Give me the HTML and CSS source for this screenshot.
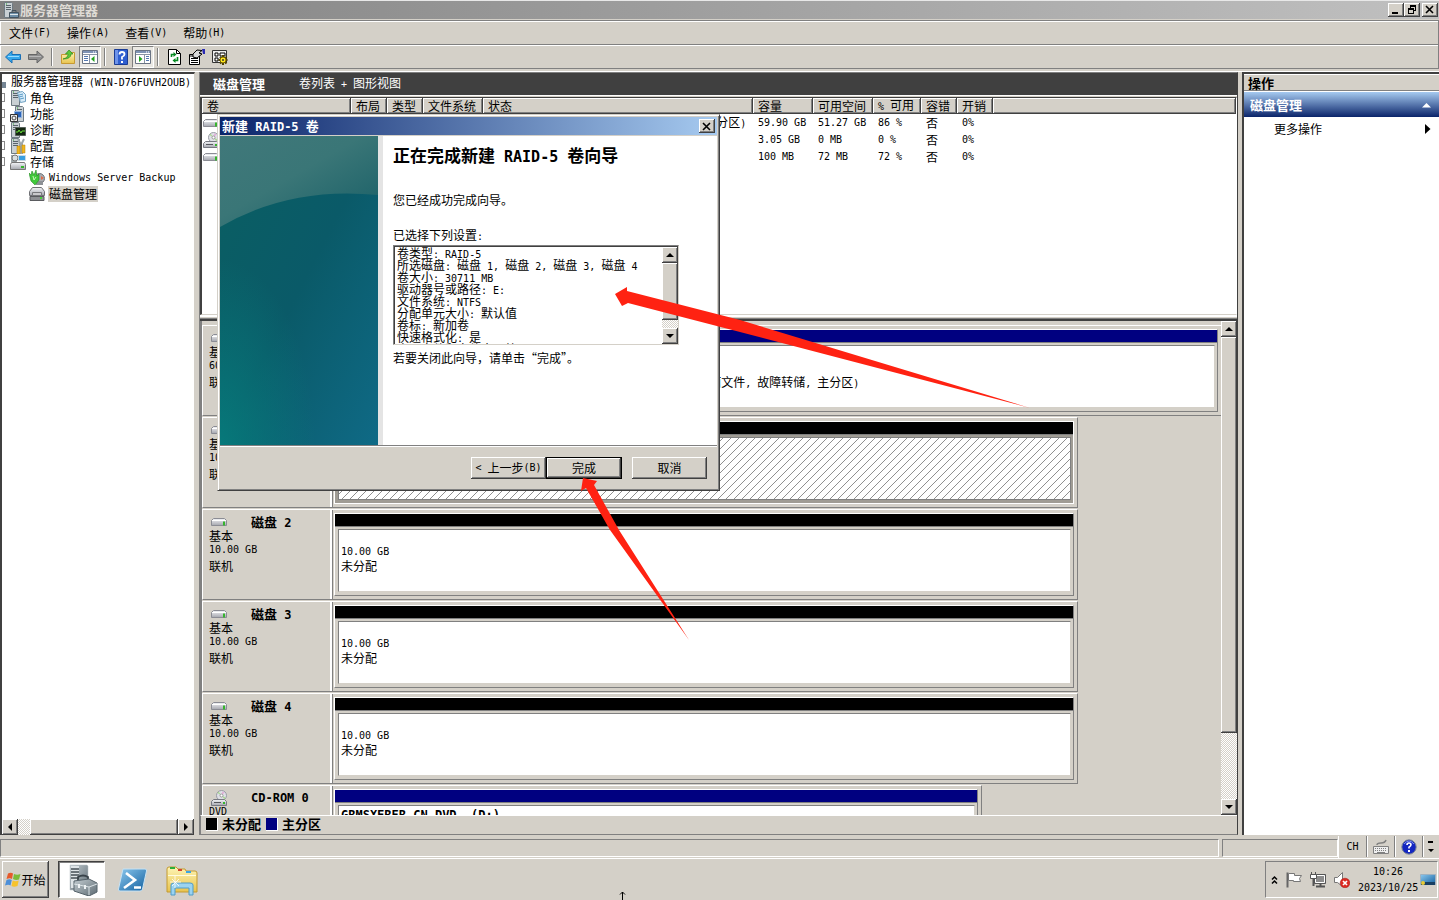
FILE: index.html
```html
<!DOCTYPE html>
<html lang="zh-CN">
<head>
<meta charset="utf-8">
<title>服务器管理器</title>
<link rel="stylesheet" href="styles.css">
</head>
<body>
<svg class="defs" aria-hidden="true">
  <defs>
    <linearGradient id="gSteel" x1="0" y1="0" x2="0" y2="1"><stop offset="0" stop-color="#f4f5f8"/><stop offset="1" stop-color="#a4a6ae"/></linearGradient>
    <linearGradient id="gBox" x1="0" y1="0" x2="1" y2="1"><stop offset="0" stop-color="#c3cdd2"/><stop offset="1" stop-color="#5d6a72"/></linearGradient>
    <linearGradient id="gBlue" x1="0" y1="0" x2="1" y2="1"><stop offset="0" stop-color="#8cc8ee"/><stop offset="1" stop-color="#12609f"/></linearGradient>
    <linearGradient id="gFold" x1="0" y1="0" x2="0" y2="1"><stop offset="0" stop-color="#fdf4b4"/><stop offset="1" stop-color="#e8c34e"/></linearGradient>
    <linearGradient id="gBanner" x1="0" y1="0" x2="1" y2="1"><stop offset="0" stop-color="#0a5f62"/><stop offset=".5" stop-color="#0a5a68"/><stop offset="1" stop-color="#0f6a86"/></linearGradient>
    <linearGradient id="gHaze" x1="0" y1="0" x2="1" y2="1"><stop offset="0" stop-color="#40787a"/><stop offset=".45" stop-color="#3a7677"/><stop offset="1" stop-color="#175e66"/></linearGradient>
    <radialGradient id="gGlow" cx="0" cy="1" r=".6"><stop offset="0" stop-color="#06807e" stop-opacity=".8"/><stop offset="1" stop-color="#06807e" stop-opacity="0"/></radialGradient>
    <symbol id="drive" viewBox="0 0 16 10"><path d="M2.500 1.500h11l2 2v5h-15v-5z" fill="url(#gSteel)" stroke="#8b8c94"/><path d="M1 3.500h14" stroke="#fff"/><path d="M12 4.500h2v4h-2z" fill="#35b52c"/></symbol>
    <symbol id="dvd" viewBox="0 0 16 16"><circle cx="10.500" cy="5.500" r="5" fill="#dfe0e6" stroke="#999ba5"/><path d="M10.500 5.500L6.500 3l1-1.500zM10.500 5.500l4 2-1 2z" fill="#a9d992"/><path d="M10.500 5.500l1-4 2 1z" fill="#e4a9d8"/><circle cx="10.500" cy="5.500" r="1.500" fill="#fff" stroke="#999"/><path d="M2.500 9.500h11l2 2v4H.5v-4z" fill="url(#gSteel)" stroke="#777982"/><path d="M3 12.500h7" stroke="#55565c"/><path d="M12 12h2v2h-2z" fill="#35b52c"/></symbol>
    <symbol id="tower" viewBox="0 0 16 16"><path d="M1.500.5h7l1 1v14h-8z" fill="#c9d0d4" stroke="#6e7a82"/><path d="M3 3.500h5M3 5.500h5M3 7.500h5" stroke="#59646b"/><path d="M3 2h1" stroke="#2ba32b"/></symbol>
    <symbol id="server" viewBox="0 0 16 16"><use href="#tower"/><path d="M6.500 10.500h9v5h-9z" fill="#6e8fa8" stroke="#43525e"/><path d="M9 10V8.500h4V10" fill="none" stroke="#43525e"/><path d="M7 12.500h8" stroke="#dce5ea"/></symbol>
    <symbol id="roles" viewBox="0 0 16 16"><use href="#tower"/><path d="M7.500 2.500l5-1 3 3v7l-5 1z" fill="#d9ecf8" stroke="#6fa1c2"/><path d="M9 5l4-1M9 7l4-1M10 9l4-1" stroke="#5a9bc8"/></symbol>
    <symbol id="features" viewBox="0 0 16 16"><use href="#tower" x="4"/><path d="M4.500 5.500h7v6h-7z" fill="#2b64b8" stroke="#93b4e0"/><path d="M.5 8.500h7v7h-7z" fill="#eee" stroke="#333"/><circle cx="4" cy="12" r="2" fill="none" stroke="#444"/></symbol>
    <symbol id="diag" viewBox="0 0 16 16"><use href="#tower"/><path d="M5.500 5.500h10v8h-10z" fill="#142812" stroke="#55605a"/><path d="M6 10h2l1-2 2 3 1-2h3" fill="none" stroke="#6ae23b"/></symbol>
    <symbol id="config" viewBox="0 0 16 16"><use href="#tower"/><path d="M8 1l2 4v10h2V5l2-4" fill="none" stroke="#9da6aa" stroke-width="2"/><path d="M7 8h3v8H7zM12 7h3v8h-3z" fill="#f0b51e" stroke="#b88206" stroke-width=".5"/></symbol>
    <symbol id="storage" viewBox="0 0 16 16"><path d="M1 1h6v7H1z" fill="#9fa8ac"/><circle cx="5" cy="4" r="3" fill="#d9dee0" stroke="#777"/><path d="M8.500 1.500h7v5h-7z" fill="#3a9fe0" stroke="#c7d8e4"/><path d="M1.500 8.500h13l1 2v5H.5v-5z" fill="url(#gSteel)" stroke="#777"/><path d="M11 12h3v2h-3z" fill="#35b52c"/></symbol>
    <symbol id="backup" viewBox="0 0 16 16"><circle cx="10.500" cy="8.500" r="5" fill="#a9adb2" stroke="#70757a"/><path d="M7 11h7v4H7z" fill="#8d9196"/><path d="M0 3l2 2 1-4 2 4 2-5 1 6 2-2v6l-4 5-4-4z" fill="#41c93b" stroke="#218b20" stroke-width=".6"/><path d="M4 6l1 4 2-3" fill="none" stroke="#c9f5b8"/><path d="M12 6l3 2-3 2z" fill="#df6c48"/></symbol>
    <symbol id="diskmgmt" viewBox="0 0 16 16"><path d="M3.500 1.500h9l3 4v4H.5v-4z" fill="url(#gSteel)" stroke="#6f7074"/><path d="M3.500 6.500h9v3h-9z" fill="#c9c9cc" stroke="#77787c"/><path d="M1 10.500h14v4H1z" fill="#8e9094" stroke="#5a5b5f"/><path d="M11 12h2" stroke="#46d33b" stroke-width="2"/></symbol>
    <symbol id="panel" viewBox="0 0 16 16"><path d="M.5 1.500h15v13H.5z" fill="#fff" stroke="#6a7484"/><path d="M1 2h14v2H1z" fill="#7f93b5"/><path d="M11 3h1m1 0h1" stroke="#fff"/><path d="M1 5.500h14M7.500 6v8" stroke="#8a94a5"/><path d="M2 7.500h4M2 9.500h4M2 11.500h4" stroke="#5579b0"/><path d="M12.500 7v6L9 10z" fill="#24a320"/></symbol>
  </defs>
</svg>

<div class="app">
  <header class="titlebar">
    <svg class="i16"><use href="#server"/></svg>
    <h1>服务器管理器</h1>
    <div class="winbtns">
      <button class="bevel" aria-label="最小化"><svg viewBox="0 0 10 9"><path d="M1 7h6v2H1z"/></svg></button>
      <button class="bevel" aria-label="还原"><svg viewBox="0 0 10 9"><path d="M3 0h6v6H7V5h1V2H4v1H3zM1 3h6v6H1zm1 2v3h4V5z" fill-rule="evenodd"/></svg></button>
      <button class="bevel close" aria-label="关闭"><svg viewBox="0 0 10 9"><path d="M1 1l7 7M8 1L1 8" stroke="#000" stroke-width="1.600"/></svg></button>
    </div>
  </header>

  <nav class="menubar">
    <button>文件<span class="lat">(F)</span></button>
    <button>操作<span class="lat">(A)</span></button>
    <button>查看<span class="lat">(V)</span></button>
    <button>帮助<span class="lat">(H)</span></button>
  </nav>

  <div class="toolbar">
    <button aria-label="后退"><svg class="i16" viewBox="0 0 16 16"><path d="M.5 8L7 2v3.500h8.500v5H7V14z" fill="#35a7ea" stroke="#1a6fb5"/><path d="M3 7.500h11" stroke="#9bdcff"/></svg></button>
    <button aria-label="前进"><svg class="i16" viewBox="0 0 16 16"><path d="M15.500 8L9 2v3.500H.5v5H9V14z" fill="#8e8e8e" stroke="#666"/><path d="M1 7.500h12" stroke="#b9b9b9"/></svg></button>
    <i class="sep"></i>
    <button aria-label="向上"><svg class="i16" viewBox="0 0 16 16"><path d="M1.500 5.500h5l1-2h7v11h-13z" fill="url(#gFold)" stroke="#c79a33"/><path d="M3 10q5-1 5-5H5.500L9 1l4 4h-2q0 5-8 5z" fill="#5cc83b" stroke="#2e8a1c" stroke-width=".7"/></svg></button>
    <button class="pressed" aria-label="显示/隐藏控制台树"><svg class="i16"><use href="#panel"/></svg></button>
    <i class="sep"></i>
    <button aria-label="帮助"><svg class="i16" viewBox="0 0 16 16"><path d="M1.500.5h13v15h-13z" fill="#2f5fd0" stroke="#1b3c94"/><path d="M2 1h3v14H2z" fill="#6d93ea"/><path d="M6.500 5.500q0-2.500 2.500-2.500t2.500 2.200Q11.500 7 9 8v2.500" fill="none" stroke="#fff" stroke-width="1.800"/><path d="M8 12h2v2H8z" fill="#fff"/></svg></button>
    <button class="pressed" aria-label="显示/隐藏操作窗格"><svg class="i16" viewBox="0 0 16 16"><path d="M.5 1.500h15v13H.5z" fill="#fff" stroke="#6a7484"/><path d="M1 2h14v2H1z" fill="#7f93b5"/><path d="M11 3h1m1 0h1" stroke="#fff"/><path d="M1 5.500h14M9.500 6v8" stroke="#8a94a5"/><path d="M11 7.500h3M11 9.500h3M11 11.500h3" stroke="#5579b0"/><path d="M4 7v6l3.500-3z" fill="#24a320"/></svg></button>
    <i class="sep"></i>
    <button aria-label="刷新"><svg class="i16" viewBox="0 0 16 16"><path d="M2.500.5h8l4 4v11h-12z" fill="#fff" stroke="#000"/><path d="M10.500.5v4h4" fill="none" stroke="#000"/><path d="M5.500 8V5.500H8M11.500 8v3.500H9" fill="none" stroke="#078a23" stroke-width="1.600"/><path d="M7.500 3l3 2.500-3 2.500zM9.500 9v5l-3-2.500z" fill="#078a23"/></svg></button>
    <button aria-label="属性"><svg class="i16" viewBox="0 0 16 16"><path d="M.5 5.500h10v10H.5z" fill="#fff" stroke="#000"/><path d="M1 7h9M2 9.500h7M2 11.500h7M2 13.500h7" stroke="#000"/><path d="M4 5l4-4 5 .5-3 2.500 3 1-5 4-4-1z" fill="#d8d8d8" stroke="#000"/><path d="M13 0h3v5h-2z" fill="#2a2ab4"/></svg></button>
    <button class="gear" aria-label="设置"><svg class="i16" viewBox="0 0 16 16"><path d="M.5 1.500h14v12H.5z" fill="#eee" stroke="#333"/><path d="M3 4h3v3H3zM3 9h3v3H3z" fill="#fff" stroke="#000"/><path d="M8 4h5v3H8z" fill="#fff" stroke="#000"/><path d="M11 6v10M6.500 11h9M8 8l6.500 6.500M14.500 8L8 14.500" stroke="#4a3d00" stroke-width="2"/><circle cx="11" cy="11" r="3" fill="#ffe81c" stroke="#766100"/><circle cx="11" cy="11" r="1" fill="#333"/></svg></button>
  </div>

  <main class="workspace">
    <aside class="treepane">
      <ul class="tree">
        <li class="root"><span>服务器管理器 <span class="lat">(WIN-D76FUVH2OUB)</span></span></li>
        <li><svg class="i16"><use href="#roles"/></svg><span>角色</span></li>
        <li><svg class="i16"><use href="#features"/></svg><span>功能</span></li>
        <li><svg class="i16"><use href="#diag"/></svg><span>诊断</span></li>
        <li><svg class="i16"><use href="#config"/></svg><span>配置</span></li>
        <li><svg class="i16"><use href="#storage"/></svg><span>存储</span></li>
        <li class="child"><svg class="i16"><use href="#backup"/></svg><span class="lat">Windows Server Backup</span></li>
        <li class="child"><svg class="i16"><use href="#diskmgmt"/></svg><span class="selected">磁盘管理</span></li>
      </ul>
      <div class="hscroll">
        <button class="bevel" aria-label="向左滚动"><svg viewBox="0 0 8 8"><path d="M6 0v8L2 4z"/></svg></button>
        <div class="thumb bevel"></div>
        <button class="bevel" aria-label="向右滚动"><svg viewBox="0 0 8 8"><path d="M2 0v8l4-4z"/></svg></button>
      </div>
    </aside>

    <section class="center">
      <div class="viewhead"><b>磁盘管理</b><span>卷列表<span class="lat"> + </span>图形视图</span></div>
      <div class="volumes">
        <table>
          <colgroup><col class="w149"><col class="w36"><col class="w36"><col class="w60"><col class="w270"><col class="w60"><col class="w60"><col class="w48"><col class="w36"><col class="w36"><col></colgroup>
          <thead><tr><th>卷</th><th>布局</th><th>类型</th><th>文件系统</th><th>状态</th><th>容量</th><th>可用空间</th><th><span class="lat">% </span>可用</th><th>容错</th><th>开销</th><th></th></tr></thead>
          <tbody>
            <tr><td><svg class="vol"><use href="#drive"/></svg></td><td></td><td></td><td></td><td>状态良好<span class="lat"> (</span>启动<span class="lat">, </span>页面文件<span class="lat">, </span>故障转储<span class="lat">, </span>主分区<span class="lat">)</span></td><td class="lat">59.90 GB</td><td class="lat">51.27 GB</td><td class="lat">86 %</td><td>否</td><td class="lat">0%</td><td></td></tr>
            <tr><td><svg class="vol tall"><use href="#dvd"/></svg></td><td></td><td></td><td></td><td></td><td class="lat">3.05 GB</td><td class="lat">0 MB</td><td class="lat">0 %</td><td>否</td><td class="lat">0%</td><td></td></tr>
            <tr><td><svg class="vol"><use href="#drive"/></svg></td><td></td><td></td><td></td><td></td><td class="lat">100 MB</td><td class="lat">72 MB</td><td class="lat">72 %</td><td>否</td><td class="lat">0%</td><td></td></tr>
          </tbody>
        </table>
      </div>
      <div class="splitter"></div>
      <div class="diskarea">
        <div class="disks">
          <div class="disk full">
            <div class="label"><div class="name"><svg class="drv"><use href="#drive"/></svg><b>磁盘<span class="lat"> 0</span></b></div><p>基本</p><p class="lat">60.00 GB</p><p class="state">联机</p></div>
            <div class="parts">
              <div class="part primary small"><div class="bar"></div><div class="info"></div></div>
              <div class="part primary"><div class="bar"></div><div class="info"><p><b class="lat">(C:)</b></p><p class="lat">59.90 GB NTFS</p><p>状态良好<span class="lat"> (</span>启动<span class="lat">, </span>页面文件<span class="lat">, </span>故障转储<span class="lat">, </span>主分区<span class="lat">)</span></p></div></div>
            </div>
          </div>
          <div class="disk">
            <div class="label"><div class="name"><svg class="drv"><use href="#drive"/></svg><b>磁盘<span class="lat"> 1</span></b></div><p>基本</p><p class="lat">10.00 GB</p><p class="state">联机</p></div>
            <div class="parts"><div class="part chosen"><div class="bar"></div><div class="info"></div></div></div>
          </div>
          <div class="disk">
            <div class="label"><div class="name"><svg class="drv"><use href="#drive"/></svg><b>磁盘<span class="lat"> 2</span></b></div><p>基本</p><p class="lat">10.00 GB</p><p class="state">联机</p></div>
            <div class="parts"><div class="part"><div class="bar"></div><div class="info"><p></p><p class="lat">10.00 GB</p><p>未分配</p></div></div></div>
          </div>
          <div class="disk">
            <div class="label"><div class="name"><svg class="drv"><use href="#drive"/></svg><b>磁盘<span class="lat"> 3</span></b></div><p>基本</p><p class="lat">10.00 GB</p><p class="state">联机</p></div>
            <div class="parts"><div class="part"><div class="bar"></div><div class="info"><p></p><p class="lat">10.00 GB</p><p>未分配</p></div></div></div>
          </div>
          <div class="disk">
            <div class="label"><div class="name"><svg class="drv"><use href="#drive"/></svg><b>磁盘<span class="lat"> 4</span></b></div><p>基本</p><p class="lat">10.00 GB</p><p class="state">联机</p></div>
            <div class="parts"><div class="part"><div class="bar"></div><div class="info"><p></p><p class="lat">10.00 GB</p><p>未分配</p></div></div></div>
          </div>
          <div class="disk cd">
            <div class="label"><div class="name"><svg class="drv tall"><use href="#dvd"/></svg><b class="lat">CD-ROM 0</b></div><p class="lat">DVD</p></div>
            <div class="parts"><div class="part primary"><div class="bar"></div><div class="info"><p><b class="lat">GRMSXFRER_CN_DVD&nbsp; (D:)</b></p></div></div></div>
          </div>
        </div>
        <div class="vscroll">
          <button class="bevel" aria-label="向上滚动"><svg viewBox="0 0 8 8"><path d="M0 6h8L4 2z"/></svg></button>
          <div class="thumb bevel"></div>
          <div class="track"></div>
          <button class="bevel" aria-label="向下滚动"><svg viewBox="0 0 8 8"><path d="M0 2h8L4 6z"/></svg></button>
        </div>
      </div>
      <div class="legend"><i></i><b>未分配</b><i class="blue"></i><b>主分区</b></div>
    </section>

    <aside class="actions">
      <h2>操作</h2>
      <button class="group"><b>磁盘管理</b><svg viewBox="0 0 10 6"><path d="M0 5.500h9L4.500 1z" fill="#fff"/></svg></button>
      <button class="more"><span>更多操作</span><svg viewBox="0 0 6 10"><path d="M0 0v10l5.500-5z"/></svg></button>
    </aside>
  </main>

  <footer class="status">
    <div class="cell grow"></div><div class="cell side"></div>
    <div class="langbar">
      <button class="lat">CH</button>
      <button aria-label="键盘"><svg class="i16" viewBox="0 0 16 16"><path d="M.5 7.500h15v7H.5z" fill="#eee" stroke="#808080"/><path d="M2 9.500h12M2 11.500h12" stroke="#808080" stroke-dasharray="1 1"/><path d="M4 13.500h8" stroke="#808080"/><path d="M4 6q0-2 4-2t5-3" fill="none" stroke="#808080" stroke-width="1.500"/></svg></button>
      <button aria-label="语言帮助"><svg class="i16" viewBox="0 0 16 16"><circle cx="8" cy="8" r="7.200" fill="#1426c0" stroke="#7f8894"/><path d="M3 5q5-6 10 0" fill="none" stroke="#7e93ef"/><path d="M6 6q0-2 2-2t2 1.800Q10 7 8 8.200V9.500" fill="none" stroke="#fff" stroke-width="1.600"/><path d="M7 11h2v2H7z" fill="#fff"/></svg></button>
      <button class="opts" aria-label="选项"><svg viewBox="0 0 6 12"><path d="M0 0h5v2H0zM0 8h6l-3 3z"/></svg></button>
    </div>
  </footer>

  <div class="taskbar">
    <button class="start bevel"><svg viewBox="0 0 16 16"><path d="M3 1.500q3-1.500 5 0L7 7Q5 5.500 1.500 7z" fill="#e65a2b"/><path d="M9 2q3 1.500 6.500 0l-1.500 5.500Q11 8.500 8 7z" fill="#7bbb38"/><path d="M1.500 8q3-1.500 5.300 0L5.500 13.500Q3.500 12 0 13.500z" fill="#4d8fd8"/><path d="M7.700 8.500q3 1.500 6 0L12.500 14Q9 15.500 6.500 14z" fill="#f7c32c"/></svg><span>开始</span></button>
    <button class="task active" aria-label="服务器管理器"><svg viewBox="0 0 32 32"><path d="M4 1h17l1 1v24H4z" fill="url(#gBox)" stroke="#b9c1c5" stroke-width=".5"/><path d="M5 2h8v22H5z" fill="#dfe5e8"/><path d="M5 5h8M5 8h8M5 11h8M5 14h8" stroke="#454f55" stroke-width="1.500"/><path d="M12 16v-3q5-3 10 0v3" fill="none" stroke="#39434a" stroke-width="1.800"/><path d="M8 17l15-2 8 4v9l-8 4-15-5z" fill="url(#gBox)" stroke="#55626a"/><path d="M8 20l15 3 8-3M23 23v8" fill="none" stroke="#dbe3e6"/><path d="M13 20v4M19 21v4" stroke="#eef2f4" stroke-width="2"/></svg></button>
    <button class="task" aria-label="PowerShell"><svg viewBox="0 0 32 32"><path d="M7 5h22q2 0 1.500 2l-4 18q-.5 2-2.500 2H4q-2 0-1.500-2l4-18Q7 5 7 5z" fill="url(#gBlue)" stroke="#c6e2f4"/><path d="M10 9l9 7-11 8M18 23.500h7" fill="none" stroke="#fff" stroke-width="2.600"/></svg></button>
    <button class="task" aria-label="资源管理器"><svg viewBox="0 0 32 32"><path d="M1 5q0-2 2-2h7l2 2h7l1 2h9q2 0 2 2v19H1z" fill="url(#gFold)" stroke="#c39a31"/><path d="M4 3h5v2H4z" fill="#2cae3a"/><path d="M12 5h4v2h-4z" fill="#d3452e"/><path d="M20 7h5v2h-5z" fill="#3ba5e2"/><path d="M2 11.500h28" stroke="#fffbe0"/><path d="M5 31V21q0-2 3-2h16q3 0 3 2v10h-4v-7H9v7z" fill="#9bd3f0" stroke="#4f9cc9"/><path d="M9 12v12M4 18h11M6 15l7 7M13 15l-7 7" stroke="#fff" stroke-width=".8"/></svg></button>
    <div class="tray">
      <svg class="chev" viewBox="0 0 7 10"><path d="M1 4.500L3.500 2 6 4.500M1 8.500L3.500 6 6 8.500" fill="none" stroke="#000" stroke-width="1.500"/></svg>
      <svg class="i16" viewBox="0 0 16 16"><path d="M1.500.5v15" stroke="#666" stroke-width="2"/><path d="M2.500 1.500h6v2h7l-2 3 1 3h-7v-1h-5z" fill="#fff" stroke="#777"/></svg>
      <svg class="i16" viewBox="0 0 16 16"><path d="M4.500 2.500h11v9h-11z" fill="#8c8c8c" stroke="#555"/><path d="M5.500 3.500h9v7h-9z" fill="none" stroke="#fff"/><path d="M6 14.500h9" stroke="#555" stroke-width="2"/><path d="M10.500 12v2" stroke="#555" stroke-width="2"/><path d="M3.500 6v8" stroke="#555" stroke-width="2"/><path d="M1.500 0v3M5.500 0v3" stroke="#555"/><path d="M.5 2.500h6v4h-6z" fill="#fff" stroke="#555"/></svg>
      <svg class="i16" viewBox="0 0 16 16"><path d="M.5 5.500h3l5-5v14l-5-4h-3z" fill="#fff" stroke="#777"/><circle cx="11" cy="11" r="4.800" fill="#dc2a22" stroke="#a31612" stroke-width=".5"/><path d="M9 9l4 4M13 9l-4 4" stroke="#fff" stroke-width="1.700"/></svg>
      <div class="clock"><div class="lat">10:26</div><div class="lat">2023/10/25</div></div>
      <svg class="i16" viewBox="0 0 16 16"><path d="M.5 2.500h15v10H.5z" fill="url(#gBlue)" stroke="#9fb2c0"/><path d="M1 10h14v3H1z" fill="#183f63"/><circle cx="3" cy="11" r="2" fill="#e8cb37"/></svg>
    </div>
  </div>

  <div class="dialog" role="dialog" aria-labelledby="dlgTitle">
    <div class="dlgtitle"><b id="dlgTitle">新建<span class="lat"> RAID-5 </span>卷</b><button class="bevel" aria-label="关闭对话框"><svg viewBox="0 0 10 9"><path d="M1 1l7 7M8 1L1 8" stroke="#000" stroke-width="1.600"/></svg></button></div>
    <div class="dlgbody">
      <svg class="banner" viewBox="0 0 158 309" preserveAspectRatio="none"><path d="M0 0h158v309H0z" fill="url(#gBanner)"/><path d="M0 0h158v309H0z" fill="url(#gGlow)"/><path d="M0 0h158v59Q70 50 0 91z" fill="url(#gHaze)"/></svg>
      <div class="page">
        <h2>正在完成新建<span class="lat"> RAID-5 </span>卷向导</h2>
        <p class="done">您已经成功完成向导。</p>
        <p class="cap">已选择下列设置<span class="lat">:</span></p>
        <div class="listbox">
          <div class="lines">
            <p>卷类型<span class="lat">: RAID-5</span></p>
            <p>所选磁盘<span class="lat">: </span>磁盘<span class="lat"> 1, </span>磁盘<span class="lat"> 2, </span>磁盘<span class="lat"> 3, </span>磁盘<span class="lat"> 4</span></p>
            <p>卷大小<span class="lat">: 30711 MB</span></p>
            <p>驱动器号或路径<span class="lat">: E:</span></p>
            <p>文件系统<span class="lat">: NTFS</span></p>
            <p>分配单元大小<span class="lat">: </span>默认值</p>
            <p>卷标<span class="lat">: </span>新加卷</p>
            <p>快速格式化<span class="lat">: </span>是</p>
            <p>启用文件和文件夹压缩<span class="lat">: </span>否</p>
          </div>
          <div class="vscroll">
            <button class="bevel" aria-label="向上滚动"><svg viewBox="0 0 8 8"><path d="M0 6h8L4 2z"/></svg></button>
            <div class="thumb bevel"></div>
            <div class="track"></div>
            <button class="bevel" aria-label="向下滚动"><svg viewBox="0 0 8 8"><path d="M0 2h8L4 6z"/></svg></button>
          </div>
        </div>
        <p class="hint">若要关闭此向导，请单击“完成”。</p>
      </div>
    </div>
    <div class="dlgfoot">
      <button class="btn bevel"><span class="lat">&lt; </span>上一步<span class="lat">(B)</span></button><button class="btn bevel default">完成</button><button class="btn bevel last">取消</button>
    </div>
  </div>

  <svg class="marks" viewBox="0 0 1439 900" aria-hidden="true">
    <g fill="#ff2212"><path d="M615 294L627 287V291L740 320L1030 408L740 332L628 303L622 306Z"/><path d="M583 478L597 481L594 485L619 530L689 640L610 530L586 488L581 491Z"/></g>
    <path d="M622.500 892v8M620 894.500L622.500 892L625 894.500" fill="none" stroke="#000"/>
  </svg>
</div>
</body>
</html>
```
FILE: styles.css
```css
* { box-sizing: border-box; }
body {
  margin: 0;
  background: #d4d0c8;
  color: #000;
  font: 12px/16px "Noto Sans CJK SC", sans-serif;
}
p, h1, h2, ul { margin: 0; padding: 0; }
button { font: inherit; color: inherit; background: none; border: 0; padding: 0; display: flex; align-items: center; justify-content: center; }
b, h1 { font-size: 13px; font-weight: 700; }
svg { display: block; flex: none; }
.lat { font-family: "DejaVu Sans Mono", monospace; font-size: 10px; white-space: pre; }
b .lat, b.lat { font-size: 12px; }
.defs { position: absolute; width: 0; height: 0; }
.i16 { width: 16px; height: 16px; }
.bevel {
  background: #d4d0c8;
  box-shadow: inset -1px -1px #404040, inset 1px 1px #fff, inset -2px -2px #808080;
}

.app { position: relative; display: flex; flex-direction: column; height: 100vh; min-height: 640px; overflow: hidden; }

.titlebar { height: 20px; flex: none; display: flex; align-items: center; gap: 1px; padding: 0 1px 1px 3px; background: linear-gradient(90deg, #808080, #c0c0c0); border-top: 1px solid #e8e8e8; border-bottom: 1px solid #d4d0c8; color: #dedbd5; }
.winbtns { display: flex; margin-left: auto; }
.winbtns button { width: 16px; height: 14px; }
.winbtns svg, .dlgtitle svg { width: 10px; height: 9px; }
.winbtns .close { margin-left: 2px; }

.menubar, .toolbar { height: 24px; flex: none; display: flex; align-items: center; border-top: 1px solid #808080; border-right: 1px solid #808080; box-shadow: inset 1px 1px #fff; }
.menubar { gap: 16px; padding-left: 9px; }
.toolbar { height: 25px; gap: 7px; padding-left: 5px; border-bottom: 1px solid #808080; }
.toolbar .pressed { width: 22px; height: 22px; margin: 0 -4px; border: 1px solid; border-color: #808080 #fff #fff #808080; background: #eae8e3; }
.toolbar .sep { width: 2px; height: 18px; border-left: 1px solid #808080; border-right: 1px solid #fff; }

.workspace { flex: 1; min-height: 0; display: flex; gap: 4px; margin-top: 2px; border-top: 1px solid #fff; }
.treepane { width: 195px; flex: none; display: flex; flex-direction: column; background: #fff; border-top: 2px solid #404040; border-left: 2px solid #404040; border-right: 1px solid #d4d0c8; margin-bottom: 1px; overflow: hidden; }
.tree { flex: 1; list-style: none; }
.tree li { height: 16px; display: flex; align-items: center; gap: 4px; padding-left: 8px; white-space: pre; }
.tree li:not(.child):not(.root) { background: linear-gradient(#888, #888) 0 3px / 2px 1px no-repeat, linear-gradient(#888, #888) 2px 3px / 1px 9px no-repeat, linear-gradient(#888, #888) 0 11px / 2px 1px no-repeat; }
.tree .root { padding-left: 9px; background: linear-gradient(#758594, #758594) 0 8px / 4px 6px no-repeat; }
.tree .root .lat { margin-left: 3px; }
.tree .child { padding-left: 27px; }
.selected { background: #d4d0c8; padding: 0 1px; margin-left: -1px; }
.hscroll, .vscroll { display: flex; background: repeating-conic-gradient(#d4d0c8 0 25%, #fff 0 50%) 0 0 / 2px 2px; }
.hscroll button { width: 16px; height: 16px; }
.hscroll .thumb { flex: 1; margin-left: 12px; }
.hscroll svg, .vscroll svg { width: 8px; height: 8px; }
.vscroll { width: 16px; flex: none; flex-direction: column; }
.vscroll button { height: 16px; flex: none; }
.vscroll .thumb { flex: 6 1 0; }
.vscroll .track { flex: 1 1 0; }

.center { flex: 1; min-width: 0; display: flex; flex-direction: column; border: 1px solid #808080; border-right-color: #404040; margin-bottom: 1px; }
.viewhead { height: 23px; flex: none; display: flex; align-items: center; gap: 34px; padding-left: 13px; background: #404040; color: #fff; border-bottom: 1px solid #fff; margin-bottom: 1px; }
.volumes { flex: 0 1 218px; overflow: hidden; background: #fff; border: 2px solid #404040; border-right: 1px solid #fff; border-bottom: 1px solid #d4d0c8; border-top-width: 1px; }
.volumes table { width: 100%; table-layout: fixed; border-collapse: separate; border-spacing: 0; }
.volumes th { height: 16px; padding: 0 0 0 5px; text-align: left; font-weight: 400; line-height: 14px; background: #d4d0c8; box-shadow: inset -1px -1px #404040, inset 1px 1px #fff, inset -2px -2px #808080; white-space: nowrap; }
.volumes td { height: 17px; padding: 0 0 0 5px; line-height: 14px; white-space: nowrap; overflow: hidden; }
.volumes td:first-child { padding-left: 1px; }
.w149 { width: 149px; } .w36 { width: 36px; } .w60 { width: 60px; } .w270 { width: 270px; } .w48 { width: 48px; }
.vol, .drv { width: 16px; height: 10px; }
.vol.tall, .drv.tall { height: 16px; }

.splitter { height: 6px; flex: none; border-top: 2px solid #fff; border-bottom: 2px solid #404040; box-shadow: inset 0 -1px #808080; }
.diskarea { flex: 1; min-height: 0; display: flex; border-left: 2px solid #808080; }
.disks { flex: 1; min-width: 0; overflow: hidden; padding-top: 4px; }
.disk { display: flex; height: 91px; margin-bottom: 1px; width: 876px; border: 1px solid; border-color: #fff #808080 #808080 #fff; }
.disk.full { width: auto; border-right: 0; }
.disk.cd { width: 780px; }
.label { width: 130px; flex: none; padding: 5px 0 0 6px; border-right: 1px solid #808080; box-shadow: inset -2px 0 #fff; }
.label p { line-height: 14px; }
.label .state { line-height: 16px; margin-top: 1px; }
.name { display: flex; align-items: center; gap: 24px; height: 14px; padding-left: 2px; line-height: 14px; }
.parts { flex: 1; min-width: 0; display: flex; padding: 3px 3px 3px 1px; }
.part { flex: 1; min-width: 0; display: flex; flex-direction: column; border: 1px solid; border-color: #fff #808080 #808080 #fff; }
.part.small { flex: 0 0 260px; }
.bar { height: 13px; flex: none; background: #000; border-bottom: 1px solid #808080; }
.primary .bar { background: #000080; }
.info { flex: 1; margin: 2px 2px 3px 3px; padding: 1px 0 0 2px; background: #fff; border: 1px solid; border-color: #808080 #d4d0c8 #d4d0c8 #808080; overflow: hidden; white-space: nowrap; }
.info p { height: 14px; line-height: 14px; }
.chosen { background: #a09c94; border-color: #fff; }
.chosen .info { border-color: #808080; background: linear-gradient(to bottom right, #fff 45%, #909090 48%, #909090 52%, #fff 55%) 0 0 / 8px 8px; }
.legend { height: 19px; flex: none; display: flex; align-items: center; gap: 4px; padding: 0 5px 1px; border-top: 1px solid #fff; border-left: 1px solid #808080; }
.legend i { width: 12px; height: 13px; background: #000; border: 1px solid #fff; border-width: 0 1px 1px 0; }
.legend b { line-height: 14px; padding-bottom: 2px; }
.legend .blue { background: #000080; margin-left: 1px; }

.actions { width: 197px; flex: none; background: #fff; border: solid #404040; border-width: 2px 0 0 2px; margin-bottom: 1px; }
.actions h2 { height: 17px; font-size: 13px; line-height: 16px; padding-left: 4px; background: #d4d0c8; border-top: 1px solid #fff; border-bottom: 1px solid #808080; }
.group { width: 100%; height: 25px; margin-top: 1px; padding: 0 7px 0 6px; justify-content: space-between; color: #fff; background: linear-gradient(#a6caf0, #0a246a); }
.group svg { width: 10px; height: 6px; }
.more { width: 100%; height: 24px; padding: 0 8px 0 30px; justify-content: space-between; }
.more svg { width: 6px; height: 10px; }

.status { height: 22px; flex: none; display: flex; gap: 3px; }
.cell { margin: 3px 0 1px; border: 1px solid; border-color: #808080 #fff #fff #808080; }
.grow { flex: 1; }
.side { width: 116px; }
.langbar { display: flex; background: #d4d0c8; border-left: 1px solid #fff; margin-left: -3px; padding-bottom: 1px; }
.langbar button { width: 28px; border-right: 1px solid #808080; box-shadow: 1px 0 #fff; }
.langbar .opts { width: 16px; border: 0; box-shadow: none; }
.opts svg { width: 6px; height: 12px; }

.taskbar { height: 42px; flex: none; display: flex; align-items: center; border-top: 1px solid #fff; padding: 0 1px 0 2px; }
.start { width: 47px; height: 37px; }
.start svg { width: 16px; height: 16px; }
.task { width: 47px; height: 37px; margin-left: 3px; }
.task.active { margin-left: 9px; background: #fff; border: 1px solid; border-color: #404040 #fff #fff #404040; box-shadow: inset 1px 1px #808080; }
.task svg { width: 32px; height: 32px; }
.tray { margin-left: auto; height: 37px; display: flex; align-items: center; gap: 8px; padding: 0 1px 0 5px; border: 1px solid; border-color: #808080 #fff #fff #808080; }
.chev { width: 7px; height: 10px; }
.clock { width: 60px; text-align: center; margin-right: -6px; }

.dialog { position: absolute; left: 217px; top: 114px; width: 503px; background: #d4d0c8; border: 1px solid; border-color: #d4d0c8 #404040 #404040 #d4d0c8; box-shadow: inset 1px 1px #fff, inset -1px -1px #808080; padding: 2px; }
.dlgtitle { height: 18px; display: flex; align-items: center; justify-content: space-between; padding: 0 2px; color: #fff; background: linear-gradient(90deg, #0a246a, #a6caf0); }
.dlgtitle button { width: 16px; height: 14px; }
.dlgbody { display: flex; margin-top: 1px; background: #fff; }
.banner { width: 158px; height: 309px; }
.page { flex: 1; border-left: 5px solid #e4e4e4; padding: 9px 38px 0 10px; }
.page h2 { height: 20px; font-size: 17px; line-height: 20px; font-weight: 700; white-space: nowrap; }
.page h2 .lat { font-size: 15px; }
.done { margin-top: 27px; }
.cap { margin-top: 19px; }
.listbox { display: flex; height: 100px; border: 1px solid; border-color: #808080 #d4d0c8 #d4d0c8 #808080; box-shadow: inset 1px 1px #404040; padding: 1px 0 0 1px; }
.lines { flex: 1; overflow: hidden; padding-left: 2px; white-space: nowrap; }
.lines p { height: 12px; line-height: 12px; }
.listbox .thumb { flex: 7 1 0; }
.hint { margin-top: 5px; }
.dlgfoot { display: flex; justify-content: flex-end; padding: 11px 10px 9px; border-top: 1px solid #808080; box-shadow: inset 0 1px #fff; }
.btn { width: 75px; height: 22px; }
.default { width: 76px; border: 1px solid #000; }
.last { margin-left: 10px; }

.marks { position: absolute; left: 0; top: 0; width: 1439px; height: 900px; pointer-events: none; }
```
